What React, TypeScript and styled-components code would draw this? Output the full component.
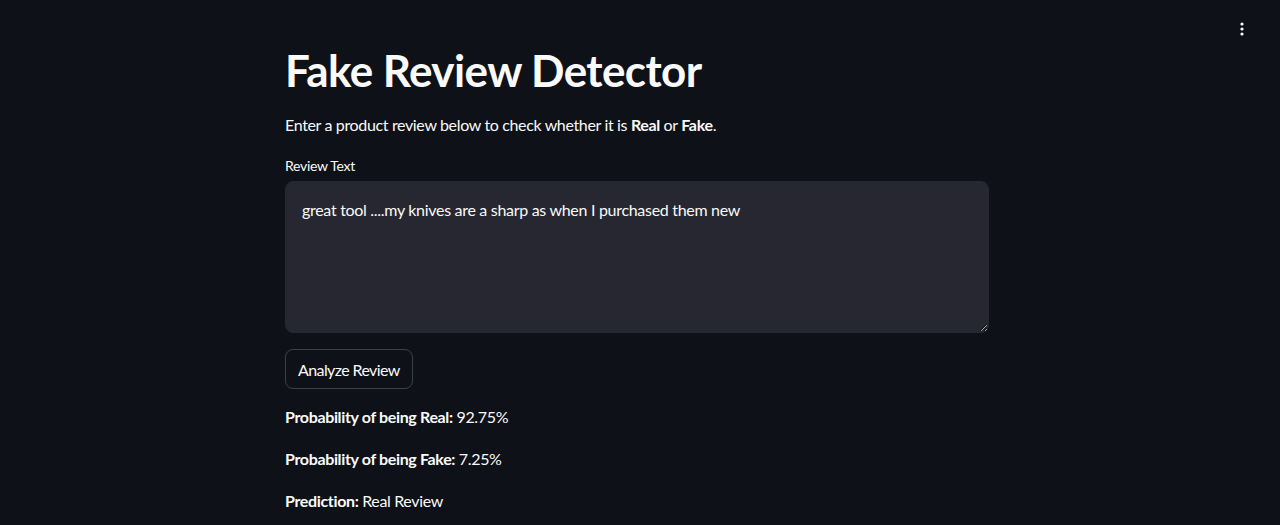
import React from "react";
import styled, { createGlobalStyle } from "styled-components";

const Global = createGlobalStyle`
  html, body { margin: 0; padding: 0; background: #0e1117; }
  body { font-family: "Lato", "Noto Sans", sans-serif; color: #fafafa; }
  * { box-sizing: border-box; }
`;

const Page = styled.div`
  min-height: 525px;
  background: #0e1117;
  position: relative;
  padding-right: 6px;
`;

const MenuButton = styled.button`
  position: absolute;
  top: 17px;
  right: 28px;
  width: 20px;
  height: 24px;
  background: transparent;
  border: none;
  padding: 0;
  display: flex;
  align-items: center;
  justify-content: center;
`;

const Main = styled.main`
  width: 704px;
  margin: 0 auto;
  padding-top: 44px;
  display: flex;
  flex-direction: column;
`;

const Title = styled.h1`
  margin: 0;
  font-size: 44px;
  font-weight: 700;
  line-height: 53px;
  letter-spacing: -0.6px;
`;

const Text = styled.p<{ $mt: number }>`
  margin: ${(p) => p.$mt}px 0 0;
  font-size: 16px;
  line-height: 24px;
  letter-spacing: -0.35px;
  b { font-weight: 700; }
`;

const Label = styled.label`
  margin-top: 18px;
  font-size: 14px;
  line-height: 21px;
  letter-spacing: -0.3px;
`;

const Area = styled.textarea`
  margin-top: 5px;
  height: 152px;
  width: 100%;
  background: #262730;
  color: #fafafa;
  border: 1px solid #262730;
  border-radius: 8px;
  padding: 16px 16px;
  font-family: "Lato", "Noto Sans", sans-serif;
  font-size: 16px;
  line-height: 24px;
  letter-spacing: -0.3px;
  outline: none;
  resize: vertical;
  color-scheme: dark;
`;

const Button = styled.button`
  margin-top: 16px;
  align-self: flex-start;
  height: 40px;
  padding: 0 12px;
  background: transparent;
  color: #fafafa;
  border: 1px solid rgba(250, 250, 250, 0.2);
  border-radius: 8px;
  font-family: "Lato", "Noto Sans", sans-serif;
  font-size: 16px;
  letter-spacing: -0.6px;
`;

export default function App() {
  return (
    <Page>
      <Global />
      <MenuButton aria-label="menu">
        <svg width="4" height="14" viewBox="0 0 4 14">
          <circle cx="2" cy="2" r="1.6" fill="#fafafa" />
          <circle cx="2" cy="7" r="1.6" fill="#fafafa" />
          <circle cx="2" cy="12" r="1.6" fill="#fafafa" />
        </svg>
      </MenuButton>
      <Main>
        <Title>Fake Review Detector</Title>
        <Text $mt={16}>
          Enter a product review below to check whether it is <b>Real</b> or <b>Fake</b>.
        </Text>
        <Label>Review Text</Label>
        <Area defaultValue="great tool ....my knives are a sharp as when I purchased them new" />
        <Button>Analyze Review</Button>
        <Text $mt={16}>
          <b>Probability of being Real:</b> 92.75%
        </Text>
        <Text $mt={18}>
          <b>Probability of being Fake:</b> 7.25%
        </Text>
        <Text $mt={18}>
          <b>Prediction:</b> Real Review
        </Text>
      </Main>
    </Page>
  );
}
